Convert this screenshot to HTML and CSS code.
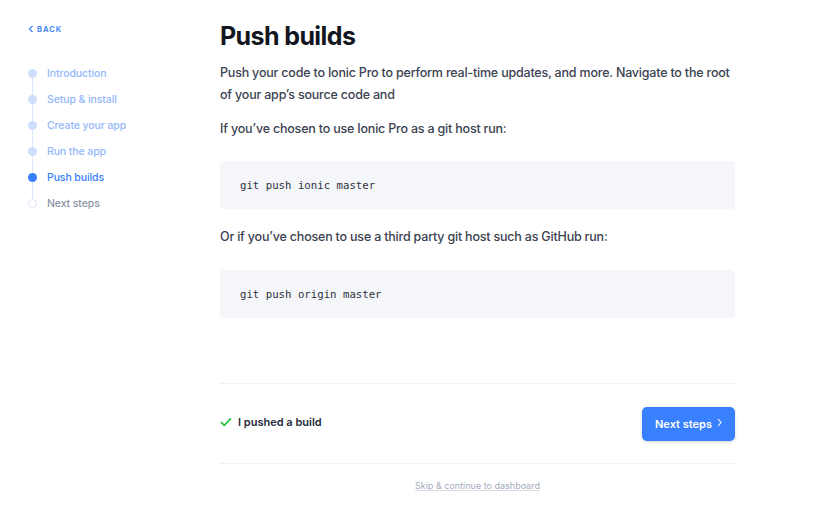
FILE: index.html
```html
<!DOCTYPE html>
<html>
<head>
<meta charset="utf-8">
<link rel="stylesheet" href="styles.css">
</head>
<body>
<div class="page">
  <aside class="sidebar">
    <a class="back" href="#"><svg width="6" height="8" viewBox="0 0 6 8"><path d="M4.5 1 L1.5 4 L4.5 7" fill="none" stroke="#4a8bfc" stroke-width="1.4"/></svg>BACK</a>
    <ul class="steps">
      <li class="done"><span class="dot"></span>Introduction</li>
      <li class="done"><span class="dot"></span>Setup &amp; install</li>
      <li class="done"><span class="dot"></span>Create your app</li>
      <li class="done"><span class="dot"></span>Run the app</li>
      <li class="active"><span class="dot"></span>Push builds</li>
      <li class="todo"><span class="dot"></span>Next steps</li>
    </ul>
  </aside>
  <main class="content">
    <h1>Push builds</h1>
    <p class="lead">Push your code to Ionic Pro to perform real-time updates, and more. Navigate to the root of your app’s source code and</p>
    <p class="label">If you’ve chosen to use Ionic Pro as a git host run:</p>
    <pre class="code">git push ionic master</pre>
    <p class="label">Or if you’ve chosen to use a third party git host such as GitHub run:</p>
    <pre class="code">git push origin master</pre>
    <div class="footer">
      <div class="check"><svg width="12" height="10" viewBox="0 0 12 10"><path d="M1 5.2 L4.3 8.4 L11 1.4" fill="none" stroke="#22c33a" stroke-width="1.7"/></svg>I pushed a build</div>
      <button class="next">Next steps<svg class="chev" width="5" height="9" viewBox="0 0 5 9"><path d="M1 1 L4 4.5 L1 8" fill="none" stroke="#fff" stroke-width="1.1"/></svg></button>
    </div>
    <div class="skip"><a href="#">Skip &amp; continue to dashboard</a></div>
  </main>
</div>
</body>
</html>
```

FILE: styles.css
```css
* { box-sizing: border-box; }
body {
  margin: 0;
  font-family: Inter, "Noto Sans", sans-serif;
  background: #fff;
  color: #3b4251;
}
.page {
  display: flex;
  width: 820px;
  height: 529px;
}
.sidebar {
  width: 220px;
  padding: 24px 0 0 28px;
}
.back {
  display: flex;
  align-items: center;
  gap: 3px;
  font-size: 7.5px;
  font-weight: 700;
  letter-spacing: 1px;
  color: #4a8bfc;
  text-decoration: none;
  height: 10px;
}
.steps {
  list-style: none;
  margin: 26px 0 0 0;
  padding: 0;
  position: relative;
}
.steps::before {
  content: "";
  position: absolute;
  left: 4px;
  top: 10px;
  bottom: 10px;
  width: 1px;
  background: #dde7fb;
}
.steps li {
  display: flex;
  align-items: center;
  height: 26px;
  font-size: 10.5px;
  font-weight: 500;
  letter-spacing: -0.1px;
  position: relative;
}
.dot {
  width: 9px;
  height: 9px;
  border-radius: 50%;
  margin-right: 10px;
  flex: none;
}
.done { color: #94b7fb; }
.done .dot { background: #cfdefc; }
.active { color: #3880ff; }
.active .dot { background: #3880ff; }
.todo { color: #8a93a5; }
.todo .dot { background: #fff; border: 1px solid #d9e2f2; }

.content {
  width: 515px;
  padding-top: 19px;
}
h1 {
  margin: 0;
  font-size: 25px;
  font-weight: 700;
  letter-spacing: -0.6px;
  color: #121620;
  line-height: 34px;
}
.lead, .label {
  font-size: 12.5px;
  font-weight: 500;
  letter-spacing: -0.2px;
  line-height: 22px;
}
.lead { margin: 9px 0 0 0; }
.label { margin: 12px 0 0 0; }
.code {
  margin: 21px 0 0 0;
  background: #f5f6f9;
  border-radius: 4px;
  height: 48px;
  padding: 0 20px;
  display: flex;
  align-items: center;
  font-family: "DejaVu Sans Mono", monospace;
  font-size: 10.7px;
  color: #2d3340;
}
.code + .label { margin-top: 17px; }
.code + .label + .code { margin-top: 22px; }
.footer {
  margin-top: 65px;
  border-top: 1px solid #f0f1f4;
  border-bottom: 1px solid #f0f1f4;
  height: 81px;
  display: flex;
  align-items: center;
  justify-content: space-between;
}
.check {
  display: flex;
  align-items: center;
  gap: 6px;
  font-size: 11px;
  font-weight: 600;
  color: #262c3c;
  margin-top: -3px;
}
.next {
  width: 93px;
  height: 34px;
  border: none;
  border-radius: 5px;
  background: #3880ff;
  color: #fff;
  font-family: inherit;
  font-size: 11px;
  font-weight: 600;
  display: flex;
  align-items: center;
  justify-content: center;
  gap: 5px;
  box-shadow: 0 1px 3px rgba(30,40,70,0.2);
}
.chev { margin-top: -3px; }
.skip {
  text-align: center;
  margin-top: 9px;
}
.skip a {
  font-size: 9px;
  color: #a3abbb;
  text-decoration: underline;
  text-decoration-color: #d5dae3;
}
```
